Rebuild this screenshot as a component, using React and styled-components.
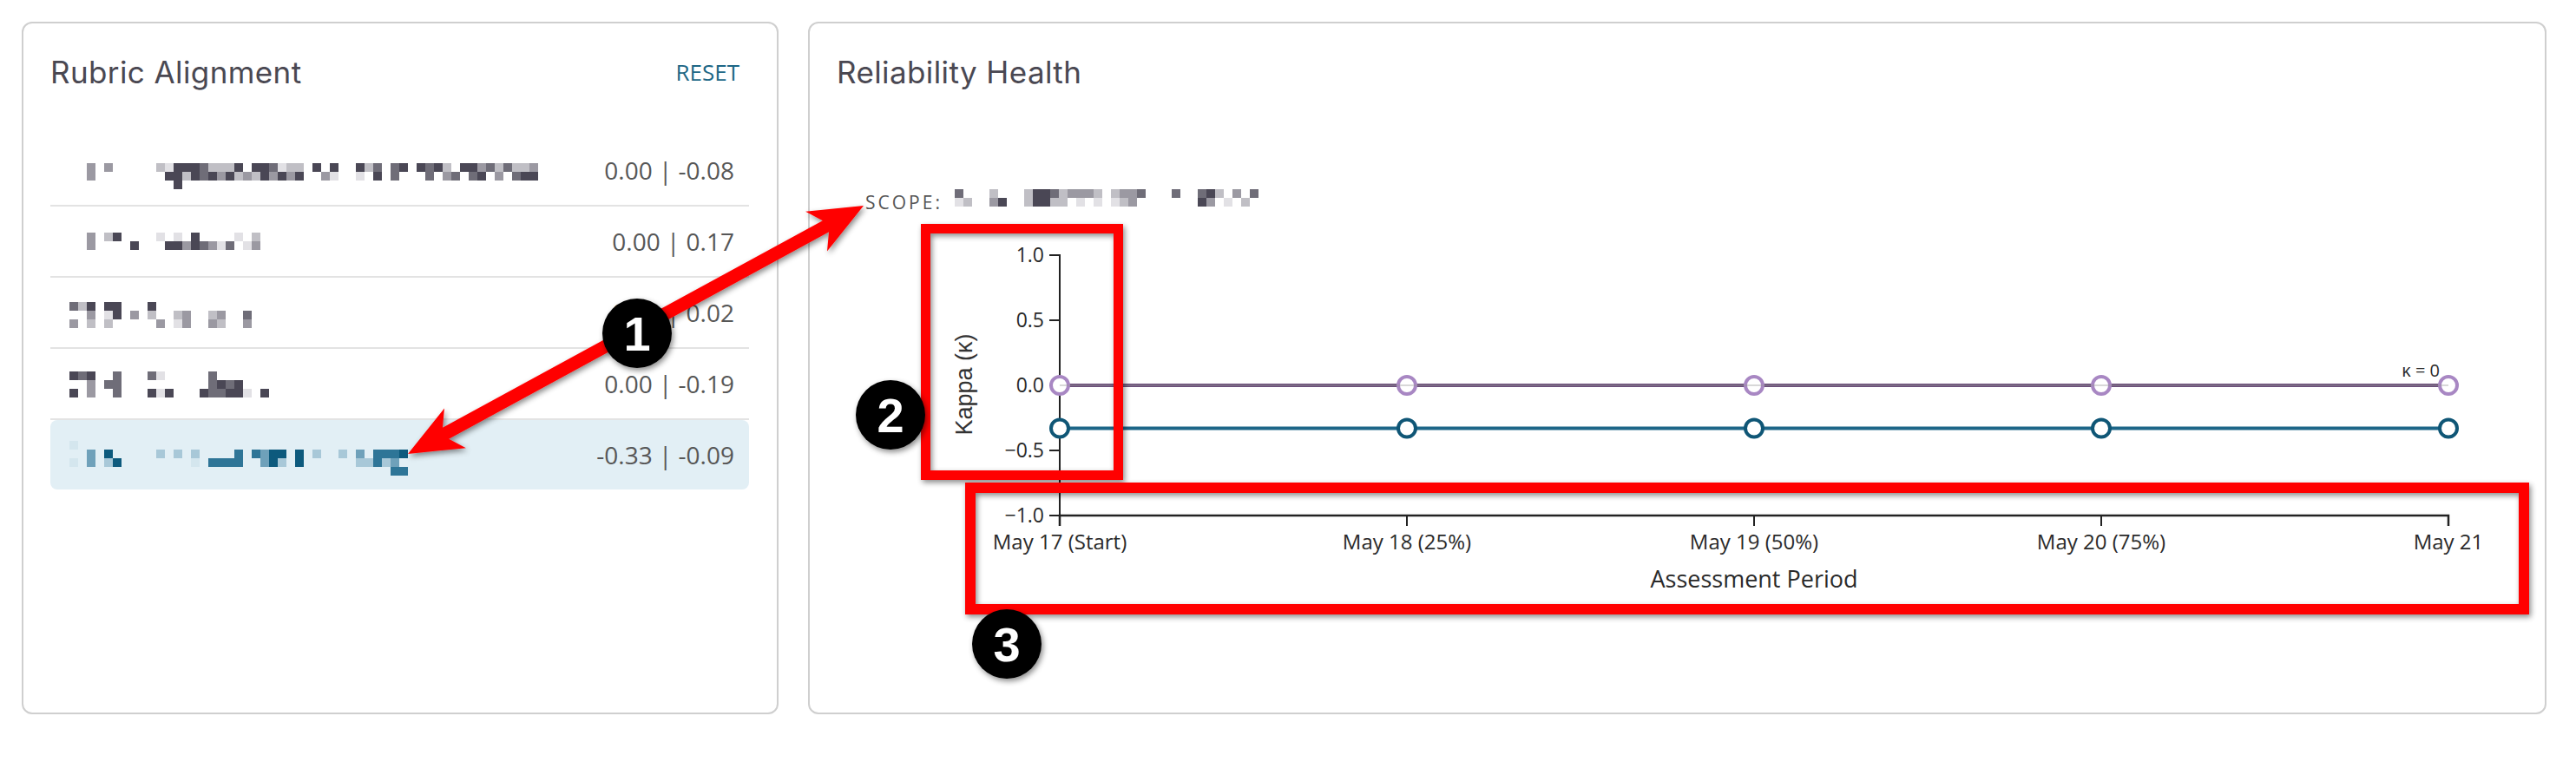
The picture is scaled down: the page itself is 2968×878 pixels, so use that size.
import React from "react";
import styled, { createGlobalStyle } from "styled-components";

const GlobalStyle = createGlobalStyle`
  html, body {
    margin: 0;
    padding: 0;
    background: #ffffff;
  }
  body {
    font-family: "Open Sans", "Noto Sans", sans-serif;
    color: #333;
  }
  * {
    box-sizing: border-box;
  }
`;

const Page = styled.div`
  position: relative;
  width: 2968px;
  height: 878px;
  display: flex;
  gap: 34px;
  padding: 25px 34px 55px 25px;
`;

const Card = styled.section`
  flex: ${(p) => (p.$width ? `0 0 ${p.$width}px` : "1 1 auto")};
  display: flex;
  flex-direction: column;
  border: 2px solid #cfcfcf;
  border-radius: 12px;
  padding: 36px 32px 36px 31px;
  background: #fff;
`;

const CardHeader = styled.div`
  display: flex;
  align-items: center;
  justify-content: space-between;
  height: 40px;
`;

const CardTitle = styled.h2`
  margin: 0;
  font-family: Inter, "Noto Sans", sans-serif;
  font-size: 35px;
  font-weight: 400;
  line-height: 40px;
  letter-spacing: 0.4px;
  color: #4a4852;
`;

const ResetButton = styled.button`
  background: none;
  border: none;
  padding: 3px 11px;
  font-family: "Open Sans", sans-serif;
  font-size: 26px;
  font-weight: 500;
  line-height: 34px;
  color: #1d6786;
  cursor: pointer;
`;

const RubricList = styled.div`
  display: flex;
  flex-direction: column;
  margin-top: 53px;
`;

const RubricRow = styled.div`
  display: flex;
  align-items: center;
  justify-content: space-between;
  height: ${(p) => (p.$active ? "80px" : "82px")};
  padding: 0 17px 0 22px;
  border-bottom: ${(p) => (p.$active ? "none" : "2px solid #e3e3e3")};
  border-radius: ${(p) => (p.$active ? "8px" : "0")};
  background: ${(p) => (p.$active ? "#e2eff5" : "transparent")};
`;

const RowValue = styled.span`
  font-size: 28px;
  line-height: 36px;
  color: #575757;
  white-space: pre;
`;

const ScopeRow = styled.div`
  display: flex;
  align-items: flex-start;
  gap: 14px;
  margin-top: 115px;
  padding-left: 33px;
`;

const ScopeLabel = styled.span`
  font-size: 21px;
  line-height: 30px;
  letter-spacing: 3px;
  color: #555;
  text-transform: uppercase;
`;

const ChartSvg = styled.svg`
  display: block;
  flex: 0 0 auto;
`;

const TickText = styled.text`
  font-family: "Open Sans", sans-serif;
  font-size: ${(p) => p.$size || 24}px;
  fill: #2a2a2a;
`;

const AxisTitle = styled.text`
  font-family: "Open Sans", sans-serif;
  font-size: 27px;
  fill: #2a2a2a;
`;

const KappaTitle = styled.text`
  font-family: "Liberation Sans", Arial, sans-serif;
  font-size: 27px;
  fill: #333;
`;

const Overlay = styled.svg`
  position: absolute;
  top: 0;
  left: 0;
  pointer-events: none;
`;

const BadgeText = styled.text`
  font-family: "Liberation Sans", Arial, sans-serif;
  font-weight: 700;
  font-size: 56px;
  fill: #fff;
`;

// pixelated (redacted) labels, one char per 10px cell
const GRAY = { 1: "#4a4755", 2: "#6f6d78", 3: "#9b99a2", 4: "#c0bfc5", 5: "#e2e1e5" };
const TEAL = { 1: "#0d5a7d", 2: "#2e7597", 3: "#6fa1ba", 4: "#a8c8d8", 5: "#d4e6ee" };

const Redacted = ({ rows, offset = 0, height, palette = GRAY }) => {
  const cols = Math.max(...rows.map((r) => r.length));
  return (
    <svg width={cols * 10} height={height} style={{ flex: "0 0 auto" }}>
      {rows.map((row, r) =>
        row.split("").map((c, i) =>
          c === " " ? null : (
            <rect key={`${r}-${i}`} x={i * 10} y={offset + r * 10} width="10" height="10" fill={palette[c]} />
          )
        )
      )}
    </svg>
  );
};

const rubrics = [
  {
    value: "0.00 | -0.08",
    offset: 16,
    rows: [
      "  3 3     4511124441 112544 1 1  142 21 1214 113242443",
      "  3        1141213143413131  35  5 1 2   2 32 21 3 211",
      "            1",
    ],
  },
  {
    value: "0.00 | 0.17",
    offset: 14,
    rows: ["  3 41    5 5 1    5 4", "  3    1   11312352 53"],
  },
  {
    value: "0.00 | 0.02",
    offset: 12,
    rows: ["241 11   1", "  3 51 3 4  43  43  2", "3 4 4     3 53  34  3"],
  },
  {
    value: "0.00 | -0.19",
    offset: 10,
    rows: ["121  2   25     2", "  3 22          2121", "1 3  2   151   122115 1"],
  },
  {
    value: "-0.33 | -0.09",
    offset: 8,
    active: true,
    rows: [
      "5",
      "  3 1     4 4 4    2 2311 1 4  4 3 2221",
      "5 3 41        5 2222  314 1      44243",
      "                                     22",
    ],
  },
];

const scopeRows = ["2   4   411243334 4332   2  214 3 2", "54  31  41144 5 5 543       13 5 4"];

// chart geometry (px inside the chart svg)
const X0 = 257;
const STEP = 400;
const yOf = (v) => 46 + (1 - v) * 150;
const xTicks = ["May 17 (Start)", "May 18 (25%)", "May 19 (50%)", "May 20 (75%)", "May 21"];
const yTicks = [1, 0.5, 0, -0.5, -1];
const fmt = (v) => (v < 0 ? "\u2212" : "") + Math.abs(v).toFixed(1);
const series = [
  { value: 0, line: "#6b4f7b", dot: "#a887c3", width: 4 },
  { value: -0.33, line: "#1d6688", dot: "#0f5676", width: 4 },
];

const KappaChart = () => {
  const bottom = yOf(-1);
  const right = X0 + STEP * 4;
  return (
    <ChartSvg width="1936" height="470">
      <path
        d={`M${X0 - 12},${yOf(1)}H${X0}V${bottom}H${X0 - 12}`}
        fill="none"
        stroke="#222"
        strokeWidth="2"
      />
      {yTicks.map((v) => (
        <g key={v}>
          <line x1={X0 - 12} x2={X0} y1={yOf(v)} y2={yOf(v)} stroke="#222" strokeWidth="2" />
          <TickText $size={23} x={X0 - 18} y={yOf(v) + 8} textAnchor="end">
            {fmt(v)}
          </TickText>
        </g>
      ))}
      <path
        d={`M${X0},${bottom + 12}V${bottom}H${right}V${bottom + 12}`}
        fill="none"
        stroke="#222"
        strokeWidth="2.5"
      />
      {xTicks.map((t, i) => (
        <g key={t}>
          <line x1={X0 + i * STEP} x2={X0 + i * STEP} y1={bottom} y2={bottom + 12} stroke="#222" strokeWidth="2" />
          <TickText x={X0 + i * STEP} y={385} textAnchor="middle">
            {t}
          </TickText>
        </g>
      ))}
      <AxisTitle x={X0 + STEP * 2} y={429} textAnchor="middle">
        Assessment Period
      </AxisTitle>
      <KappaTitle transform={`translate(156, ${yOf(0) - 1}) rotate(-90)`} textAnchor="middle">
        Kappa (κ)
      </KappaTitle>

      {series.map((s) => (
        <g key={s.value}>
          <line x1={X0} x2={right} y1={yOf(s.value)} y2={yOf(s.value)} stroke={s.line} strokeWidth={s.width} />
          {xTicks.map((t, i) => (
            <circle
              key={t}
              cx={X0 + i * STEP}
              cy={yOf(s.value)}
              r="10"
              fill="#fff"
              stroke={s.dot}
              strokeWidth={s.width}
            />
          ))}
        </g>
      ))}
      <line x1={X0} x2={right} y1={yOf(0)} y2={yOf(0)} stroke="#9a9a9a" strokeOpacity="0.5" strokeWidth="1.5" />
      <TickText $size={20} x={right - 10} y={yOf(0) - 10} textAnchor="end">
        κ = 0
      </TickText>
    </ChartSvg>
  );
};

const arrowPoints = (x1, y1, x2, y2, w, L, H) => {
  const len = Math.hypot(x2 - x1, y2 - y1);
  const ux = (x2 - x1) / len;
  const uy = (y2 - y1) / len;
  const px = -uy;
  const py = ux;
  const at = (bx, by, a, b) => `${bx + ux * a + px * b},${by + uy * a + py * b}`;
  return [
    at(x1, y1, 0, 0),
    at(x1, y1, L, H),
    at(x1, y1, L * 0.8, w / 2),
    at(x2, y2, -L * 0.8, w / 2),
    at(x2, y2, -L, H),
    at(x2, y2, 0, 0),
    at(x2, y2, -L, -H),
    at(x2, y2, -L * 0.8, -w / 2),
    at(x1, y1, L * 0.8, -w / 2),
    at(x1, y1, L, -H),
  ].join(" ");
};

const badges = [
  { n: 1, x: 734, y: 384 },
  { n: 2, x: 1026, y: 478 },
  { n: 3, x: 1160, y: 742 },
];

const Annotations = () => (
  <Overlay width="2968" height="878">
    <defs>
      <filter id="shade" x="-20%" y="-20%" width="140%" height="140%">
        <feDropShadow dx="2" dy="3" stdDeviation="3" floodColor="#000" floodOpacity="0.45" />
      </filter>
    </defs>
    <g filter="url(#shade)">
      <rect x="1066.5" y="263.5" width="222" height="284" fill="none" stroke="#ff0000" strokeWidth="11" />
      <rect x="1118" y="562" width="1790" height="140" fill="none" stroke="#ff0000" strokeWidth="12" />
      <polygon points={arrowPoints(470, 523, 995, 237, 15, 62, 26)} fill="#ff0000" />
    </g>
    {badges.map((b) => (
      <g key={b.n} filter="url(#shade)">
        <circle cx={b.x} cy={b.y} r="40" fill="#000" />
        <BadgeText x={b.x} y={b.y + 20} textAnchor="middle">
          {b.n}
        </BadgeText>
      </g>
    ))}
  </Overlay>
);

const App = () => (
  <>
    <GlobalStyle />
    <Page>
      <Card $width={872}>
        <CardHeader>
          <CardTitle>Rubric Alignment</CardTitle>
          <ResetButton>RESET</ResetButton>
        </CardHeader>
        <RubricList>
          {rubrics.map((r) => (
            <RubricRow key={r.value} $active={r.active}>
              <Redacted rows={r.rows} offset={r.offset} height={48} palette={r.active ? TEAL : GRAY} />
              <RowValue>{r.value}</RowValue>
            </RubricRow>
          ))}
        </RubricList>
      </Card>
      <Card>
        <CardHeader>
          <CardTitle>Reliability Health</CardTitle>
        </CardHeader>
        <ScopeRow>
          <ScopeLabel>Scope:</ScopeLabel>
          <Redacted rows={scopeRows} height={20} />
        </ScopeRow>
        <KappaChart />
      </Card>
      <Annotations />
    </Page>
  </>
);

export default App;
